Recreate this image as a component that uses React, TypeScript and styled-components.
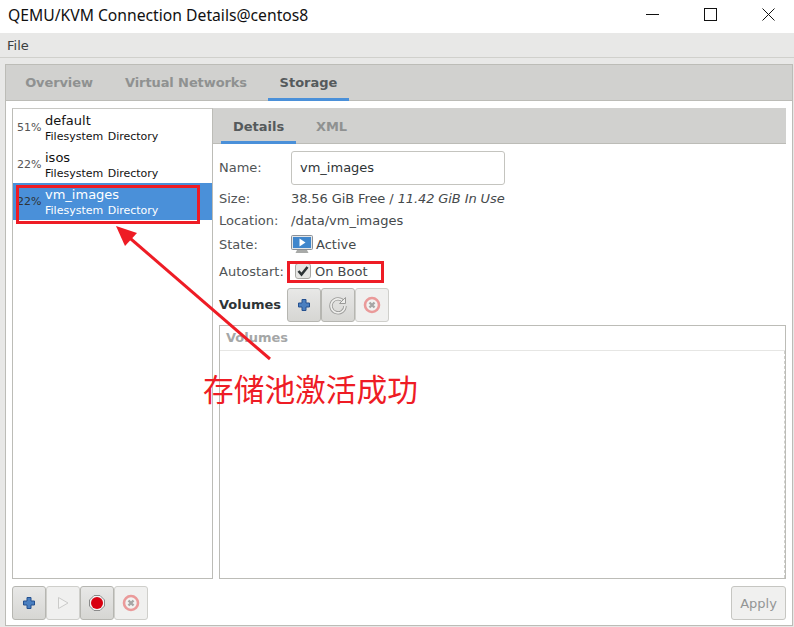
import React from "react";
import styled, { createGlobalStyle } from "styled-components";

const Global = createGlobalStyle`
  html, body { margin: 0; padding: 0; background: #fff; }
  #root { width: 794px; height: 627px; overflow: hidden; }
  * { box-sizing: border-box; }
`;
const Win = styled.div`
  position: relative; width: 794px; height: 627px; display: flex; flex-direction: column;
  background: #e8e8e7; font-family: "DejaVu Sans", sans-serif; color: #2e3436;
`;
const TitleBar = styled.div`
  height: 33px; flex: none; background: #fff; display: flex; align-items: center; justify-content: space-between;
  padding: 0 19px 4px 8px; font: 15.7px "Noto Sans", "Open Sans", sans-serif; color: #111;
`;
const WinButtons = styled.div`display: flex; gap: 45px; align-items: center;`;
const MenuBar = styled.div`
  height: 25px; flex: none; border-bottom: 1px solid #d0d0cc; padding: 5px 7px 0; font-size: 13px; line-height: 16px; color: #3a3f41;
`;
const Notebook = styled.div`
  flex: none; margin: 6px 1px 0 5px; height: 562px; border: 1px solid #bcbcb7; background: #fff; display: flex; flex-direction: column;
`;
const TabBar = styled.div<{ $pad: number }>`
  flex: none; height: 36px; padding-left: ${p => p.$pad}px; display: flex; background: #d1d1cf; border-bottom: 1px solid #bcbcb7;
`;
const Tab = styled.div<{ $on?: boolean; $w: number; $gap?: number; $lift?: number }>`
  width: ${p => p.$w}px; margin-right: ${p => p.$gap ?? 0}px; padding-bottom: ${p => p.$lift ?? 0}px;
  display: flex; justify-content: center; align-items: center; font-size: 13px; font-weight: 700;
  color: ${p => (p.$on ? "#555a5c" : "#8f9191")};
  box-shadow: ${p => (p.$on ? "inset 0 -3px 0 #4a90d9" : "none")};
  margin-bottom: -1px; letter-spacing: ${p => (p.$on ? "0" : "-0.1px")};
`;
const Body = styled.div`flex: 1; min-height: 0; display: flex; flex-direction: column; padding: 7px 6px 5px 6px;`;
const Split = styled.div`flex: 1; min-height: 0; display: flex;`;
const PoolList = styled.div`width: 201px; flex: none; border: 1px solid #bcbcb7; border-top-color: #c8c8c4; background: #fff;`;
const Pool = styled.div<{ $sel?: boolean }>`
  height: 37px; display: flex; align-items: center; padding-left: 4px; gap: 3px;
  background: ${p => (p.$sel ? "#4a90d9" : "#fff")}; color: ${p => (p.$sel ? "#fff" : "#111")};
`;
const Pct = styled.span<{ $sel?: boolean }>`width: 25px; font-size: 11px; color: ${p => (p.$sel ? "#2e3436" : "#555")};`;
const PoolText = styled.div`display: flex; flex-direction: column;`;
const PoolName = styled.span`font-size: 13px; line-height: 16px; margin-top: 1px;`;
const PoolSub = styled.span`font-size: 11px; line-height: 14px; margin-top: 1px; word-spacing: 1px;`;
const Right = styled.div`flex: 1; min-width: 0; display: flex; flex-direction: column;`;
const Form = styled.div`flex: 1; min-height: 0; display: flex; flex-direction: column; padding: 7px 0 0 6px;`;
const Row = styled.div<{ $h: number }>`display: flex; align-items: center; height: ${p => p.$h}px; flex: none; font-size: 13px; color: #45494b;`;
const Label = styled.span<{ $lift?: number }>`width: 72px; flex: none; color: #505456; padding-bottom: ${p => p.$lift ?? 0}px;`;
const NameInput = styled.div`
  width: 214px; height: 34px; border: 1px solid #c4c4bf; border-radius: 3px; background: #fff; padding: 0 0 2px 8px; display: flex; align-items: center; color: #2e3436;
`;
const SizeValue = styled.span`letter-spacing: -0.1px;`;
const Em = styled.em`font-style: italic;`;
const IconText = styled.span<{ $indent?: number; $gap?: number }>`
  display: flex; align-items: center; gap: ${p => p.$gap ?? 3}px; margin-left: ${p => p.$indent ?? 0}px;
`;
const VolHead = styled.div`display: flex; align-items: center; height: 34px; flex: none; margin-top: 5px;`;
const VolLabel = styled.span`width: 68px; font-size: 13px; font-weight: 700; color: #2e3436; padding-bottom: 2px;`;
const IconBtn = styled.div<{ $dim?: boolean }>`
  width: 34px; height: 34px; flex: none; border: 1px solid #bcbcb7; border-radius: 3px; display: flex; align-items: center; justify-content: center;
  background: ${p => (p.$dim ? "#f0f0ef" : "linear-gradient(#e8e8e7, #d6d6d3)")};
  border-color: ${p => (p.$dim ? "#cfcfcb" : "#b6b6b1")};
`;
const VolBox = styled.div`flex: 1; min-height: 0; margin-top: 3px; border: 1px solid #bcbcb7; background: #fff; display: flex; flex-direction: column;`;
const VolHeader = styled.div`
  height: 25px; flex: none; padding-left: 6px; font-size: 13px; font-weight: 700; color: #a5a7a7; line-height: 23px; border-bottom: 1px solid #e6e6e4;
`;
const VolArea = styled.div`flex: 1; border-right: 1px dashed #d0d0cd;`;
const Footer = styled.div`flex: none; display: flex; justify-content: space-between; padding-top: 7px;`;
const BtnGroup = styled.div`display: flex;`;
const Apply = styled.div`
  width: 55px; height: 34px; border: 1px solid #c6c6c2; border-radius: 3px; background: #f0f0ef; color: #939595; font-size: 13px; display: flex; align-items: center; justify-content: center;
`;
const RedBox = styled.div<{ $l: number; $t: number; $w: number; $h: number }>`
  position: absolute; left: ${p => p.$l}px; top: ${p => p.$t}px; width: ${p => p.$w}px; height: ${p => p.$h}px; border: 3px solid #ee1c25;
`;
const Note = styled.div`
  position: absolute; left: 203px; top: 366px; font: 30.7px "Noto Sans CJK SC", sans-serif; line-height: 44px; color: #ee1c25; white-space: nowrap;
`;
const Overlay = styled.svg`position: absolute; left: 0; top: 0; pointer-events: none;`;

const Plus = () => (
  <svg width="16" height="16" viewBox="0 0 16 16">
    <path d="M6 2.500h4v3.500h3.500v4H10v3.500H6V10H2.500V6H6z" fill="#4a7fc0" stroke="#24508f" strokeWidth="1" />
  </svg>
);
const Refresh = () => (
  <svg width="20" height="20" viewBox="0 0 20 20" fill="none">
    <path d="M15.500 6.500A7 7 0 1 0 17 11" stroke="#9a9a98" strokeWidth="3.400" />
    <path d="M15.500 6.500A7 7 0 1 0 17 11" stroke="#eeeeec" strokeWidth="1.600" />
    <path d="M17.500 2.500v6h-6z" fill="#eeeeec" stroke="#9a9a98" strokeWidth="1" />
  </svg>
);
const Stop = () => (
  <svg width="18" height="18" viewBox="0 0 18 18">
    <circle cx="9" cy="9" r="7" fill="#f2f2f1" stroke="#ea9a9a" strokeWidth="2.600" />
    <path d="M6.500 6.500l5 5M11.500 6.500l-5 5" stroke="#a5a5a5" strokeWidth="2.400" />
  </svg>
);
const Play = () => (
  <svg width="16" height="16" viewBox="0 0 16 16">
    <path d="M3.500 2.500L13 8l-9.500 5.500z" fill="#f4f4f3" stroke="#cbcbc9" />
  </svg>
);
const Rec = () => (
  <svg width="18" height="18" viewBox="0 0 18 18">
    <path d="M6 1.500h6L16.500 6v6L12 16.500H6L1.500 12V6z" fill="#f4f4f4" stroke="#8a8a8a" />
    <circle cx="9" cy="9" r="6" fill="#d80010" />
  </svg>
);
const Monitor = () => (
  <svg width="22" height="19" viewBox="0 0 22 19">
    <rect x="0.500" y="0.500" width="21" height="14" rx="1" fill="#e4e6e8" stroke="#8a9098" />
    <rect x="2" y="2" width="18" height="11" fill="#3f86cc" />
    <path d="M8.500 3.500l6 4-6 4z" fill="#fff" />
    <path d="M6 15h10l1.500 3h-13z" fill="#a8aaa8" />
  </svg>
);
const Check = () => (
  <svg width="16" height="16" viewBox="0 0 16 16">
    <rect x="0.500" y="0.500" width="15" height="15" rx="2.500" fill="#e6e6e4" stroke="#a8a8a4" />
    <path d="M3.500 8l3 3.500L12.500 4" fill="none" stroke="#2e3436" strokeWidth="2.600" />
  </svg>
);

const pools = [
  { pct: "51%", name: "default" },
  { pct: "22%", name: "isos" },
  { pct: "22%", name: "vm_images", sel: true },
];

export default function App() {
  return (
    <Win>
      <Global />
      <TitleBar>
        <span>QEMU/KVM Connection Details@centos8</span>
        <WinButtons>
          <svg width="13" height="13" viewBox="0 0 13 13"><path d="M0 6.500h13" stroke="#111" strokeWidth="1" /></svg>
          <svg width="13" height="13" viewBox="0 0 13 13"><rect x="0.500" y="0.500" width="12" height="12" fill="none" stroke="#111" /></svg>
          <svg width="13" height="13" viewBox="0 0 13 13"><path d="M0.500 0.500l12 12M12.500 0.500l-12 12" stroke="#111" /></svg>
        </WinButtons>
      </TitleBar>
      <MenuBar>File</MenuBar>
      <Notebook>
        <TabBar $pad={0}>
          <Tab $w={106} $lift={2}>Overview</Tab>
          <Tab $w={148} $gap={8} $lift={2}>Virtual Networks</Tab>
          <Tab $w={81} $on $lift={2}>Storage</Tab>
        </TabBar>
        <Body>
          <Split>
            <PoolList>
              {pools.map(p => (
                <Pool key={p.name} $sel={p.sel}>
                  <Pct $sel={p.sel}>{p.pct}</Pct>
                  <PoolText>
                    <PoolName>{p.name}</PoolName>
                    <PoolSub>Filesystem Directory</PoolSub>
                  </PoolText>
                </Pool>
              ))}
            </PoolList>
            <Right>
              <TabBar $pad={8}>
                <Tab $w={75} $on>Details</Tab>
                <Tab $w={71}>XML</Tab>
              </TabBar>
              <Form>
                <Row $h={34}><Label $lift={2}>Name:</Label><NameInput>vm_images</NameInput></Row>
                <Row $h={26}><Label>Size:</Label><SizeValue>38.56 GiB Free / <Em>11.42 GiB In Use</Em></SizeValue></Row>
                <Row $h={18}><Label>Location:</Label><span>/data/vm_images</span></Row>
                <Row $h={30}><Label>State:</Label><IconText><Monitor />Active</IconText></Row>
                <Row $h={24}><Label>Autostart:</Label><IconText $indent={4} $gap={4}><Check />On Boot</IconText></Row>
                <VolHead>
                  <VolLabel>Volumes</VolLabel>
                  <IconBtn><Plus /></IconBtn>
                  <IconBtn><Refresh /></IconBtn>
                  <IconBtn $dim><Stop /></IconBtn>
                </VolHead>
                <VolBox>
                  <VolHeader>Volumes</VolHeader>
                  <VolArea />
                </VolBox>
              </Form>
            </Right>
          </Split>
          <Footer>
            <BtnGroup>
              <IconBtn><Plus /></IconBtn>
              <IconBtn $dim><Play /></IconBtn>
              <IconBtn><Rec /></IconBtn>
              <IconBtn $dim><Stop /></IconBtn>
            </BtnGroup>
            <Apply>Apply</Apply>
          </Footer>
        </Body>
      </Notebook>
      <RedBox $l={16} $t={185} $w={184} $h={39} />
      <RedBox $l={287} $t={261} $w={97} $h={22} />
      <Overlay width="794" height="627" viewBox="0 0 794 627">
        <path d="M270 359L124 233" stroke="#ee1c25" strokeWidth="3" fill="none" />
        <path d="M116 226L137 233L125 246z" fill="#ee1c25" />
      </Overlay>
      <Note>存储池激活成功</Note>
    </Win>
  );
}
